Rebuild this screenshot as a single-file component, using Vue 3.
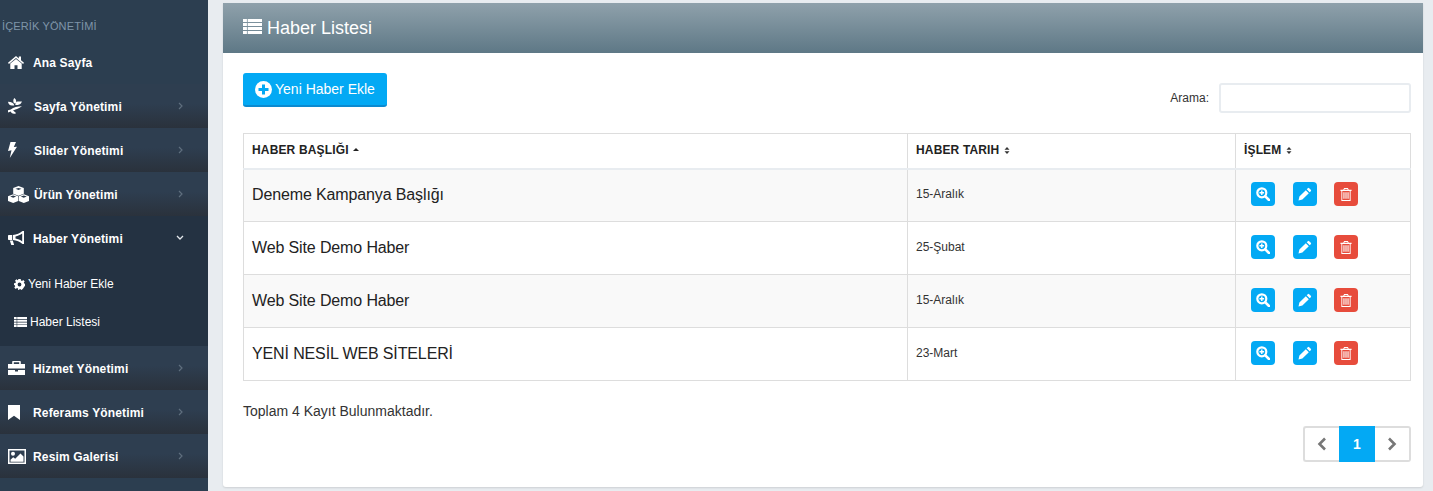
<script setup>
const chev = 'M1 1l3 3-3 3'
const icons = {
  home: { w: 16, h: 13, d: 'M8 0L0 6.700l.9 1.200L8 2l7.100 5.900.9-1.200-3-2.500V.6h-2.200v1.800zM8 2.900L2.300 7.600V13h4.200V9.300h3V13h4.200V7.600z' },
  leaf: { w: 14, h: 16, d: 'M6.200 0C5 1.800 5 3.800 6 5.200h1.600C8.700 3.600 8.400 1.500 6.200 0zM14 3.600H9.500C8.300 3.800 7.500 4.900 7.300 6.900h2.500C11.800 6.900 13.300 5.600 14 3.600zM0 3.800c.3 2.300 1.700 3.600 4 3.700h2.300C5.800 5 3.600 3.800 0 3.800zM14 8.200C9.500 8.300 5.600 9.300 2.800 11.400L0 12.300v2.300l2.700-1c.9 2 3 2.900 5.300 1.700-.9-1.400-1.900-2.100-3.200-2.500C7.200 11.400 10.800 10.500 14 8.200z' },
  bolt: { w: 9, h: 16, d: 'M2.500 0h5.500L5.800 5 9 4.700 1.800 16l1.700-7.700-3.500.6z' },
  cubes: { w: 21, h: 17, d: 'M10.500 0L15.800 2V7.800L10.500 9.800L5.200 7.800V2ZM5.200 8.200L10.200 10.200V15L5.200 17L0 15V10.200ZM15.800 8.200L21 10.200V15L15.800 17L10.800 15V10.200ZM7.500 2.800L10.500 3.900L13.500 2.800L10.500 1.900ZM2.200 10.500L5.200 11.700L8.200 10.500L5.200 9.500ZM12.800 10.500L15.800 11.700L18.800 10.500L15.800 9.500Z' },
  bullhorn: { w: 16, h: 14, d: 'M14.500 0H16v13h-1.500C12 10.800 8.500 9.300 5 9V4C8.500 3.700 12 2.200 14.500 0zM14.200 2.600C12.300 4 9.800 5 7.500 5.400v2.200c2.300.4 4.800 1.400 6.700 2.800zM0 5c0-.6.400-1 1-1h3.200v5H1c-.6 0-1-.4-1-1zM1.800 9.500h3l1.300 4.500H3.300z' },
  brief: { w: 17, h: 14, d: 'M5.200 0h6.600c.6 0 1 .4 1 1v2H17v4.500H0V3h4.200V1c0-.6.400-1 1-1zM5.800 1.300V3h5.400V1.300zM0 9h7v1.500h3V9h7v5H0z' },
  bookmark: { w: 12, h: 15, d: 'M0 0h12v15L6 10.800 0 15z' },
  picture: { w: 18, h: 15, d: 'M0 0h18v15H0zM1.500 1.500v12h15v-12zM5 2.700a2 2 0 110 4 2 2 0 010-4zM2.500 12.700v-2l2.700-2.400 2 1.500 5.300-5.300 3 3v5.200z' },
  gear: { w: 11, h: 11, d: 'M4.300 0h2.400l.3 1.500 1 .4L9.300.9l1.400 1.500-.9 1.200.4 1 1.500.2v2.400l-1.500.3-.4 1-.9 1.200-1.400 1.200-1.300-.9-1 .4-.3 1.600H4.300L4 9.400 3 9l-1.300.9L.3 8.600l.9-1.300-.4-1L0 6V4.300l1.500-.3.4-1L1 1.700 2.400.3 3.700 1.200l.4-.1zM5.500 3.600a1.900 1.900 0 100 3.800 1.900 1.900 0 000-3.800z' }
}
const list = 'M0 0h3.500v3.200H0zM4.200 0H17v3.200H4.200zM0 4.300h3.500v3.200H0zM4.200 4.300H17v3.200H4.200zM0 8.600h3.500v3.200H0zM4.200 8.600H17v3.200H4.200zM0 12.900h3.500V16H0zM4.200 12.900H17V16H4.200z'
const topItems = [
  { label: 'Sayfa Yönetimi', icon: 'leaf' },
  { label: 'Slider Yönetimi', icon: 'bolt' },
  { label: 'Ürün Yönetimi', icon: 'cubes' }
]
const lowerItems = [
  { label: 'Hizmet Yönetimi', icon: 'brief' },
  { label: 'Referams Yönetimi', icon: 'bookmark' },
  { label: 'Resim Galerisi', icon: 'picture' }
]
const rows = [
  { title: 'Deneme Kampanya Başlığı', date: '15-Aralık' },
  { title: 'Web Site Demo Haber', date: '25-Şubat' },
  { title: 'Web Site Demo Haber', date: '15-Aralık' },
  { title: 'YENİ NESİL WEB SİTELERİ', date: '23-Mart' }
]
</script>

<template>
  <div class="page">
    <aside class="sidebar">
      <div class="side-label">İÇERİK YÖNETİMİ</div>
      <a class="side-item home">
        <span class="ico"><svg :width="icons.home.w" :height="icons.home.h" :viewBox="`0 0 ${icons.home.w} ${icons.home.h}`"><path :d="icons.home.d" fill="#fff" /></svg></span>
        <span class="side-text">Ana Sayfa</span>
      </a>
      <a v-for="it in topItems" :key="it.label" class="side-item grad">
        <span class="ico"><svg :width="icons[it.icon].w" :height="icons[it.icon].h" :viewBox="`0 0 ${icons[it.icon].w} ${icons[it.icon].h}`"><path :d="icons[it.icon].d" fill="#fff" fill-rule="evenodd" /></svg></span>
        <span class="side-text shifted">{{ it.label }}</span>
        <svg class="chev" width="5" height="8" viewBox="0 0 5 8"><path :d="chev" fill="none" stroke="#5f6f7e" stroke-width="1.200" /></svg>
      </a>
      <div class="open-group">
        <a class="side-item">
          <span class="ico"><svg width="16" height="14" viewBox="0 0 16 14"><path :d="icons.bullhorn.d" fill="#fff" fill-rule="evenodd" /></svg></span>
          <span class="side-text">Haber Yönetimi</span>
          <svg class="chev down" width="8" height="6" viewBox="0 0 8 6"><path d="M1 1l3 3 3-3" fill="none" stroke="#e4e8ec" stroke-width="1.300" /></svg>
        </a>
        <a class="sub-item first">
          <svg width="11" height="11" viewBox="0 0 11 11"><path :d="icons.gear.d" fill="#fff" fill-rule="evenodd" /></svg>
          <span>Yeni Haber Ekle</span>
        </a>
        <a class="sub-item second">
          <svg width="13" height="10" viewBox="0 0 17 16" preserveAspectRatio="none"><path :d="list" fill="#fff" /></svg>
          <span>Haber Listesi</span>
        </a>
      </div>
      <a v-for="it in lowerItems" :key="it.label" class="side-item grad">
        <span class="ico"><svg :width="icons[it.icon].w" :height="icons[it.icon].h" :viewBox="`0 0 ${icons[it.icon].w} ${icons[it.icon].h}`"><path :d="icons[it.icon].d" fill="#fff" fill-rule="evenodd" /></svg></span>
        <span class="side-text">{{ it.label }}</span>
        <svg class="chev" width="5" height="8" viewBox="0 0 5 8"><path :d="chev" fill="none" stroke="#5f6f7e" stroke-width="1.200" /></svg>
      </a>
    </aside>

    <main class="main">
      <section class="card">
        <header class="card-head">
          <svg width="19" height="15" viewBox="0 0 17 16" preserveAspectRatio="none"><path :d="list" fill="#fff" /></svg>
          <h1>Haber Listesi</h1>
        </header>
        <div class="card-body">
          <div class="toolbar">
            <button class="add-btn" type="button">
              <svg width="17" height="17" viewBox="0 0 17 17"><circle cx="8.500" cy="8.500" r="8.500" fill="#fff" /><path d="M7 3.500h3V7h3.500v3H10v3.500H7V10H3.500V7H7z" fill="#03a9f4" /></svg>
              Yeni Haber Ekle
            </button>
            <label class="search">Arama:<input type="text" /></label>
          </div>
          <table class="grid">
            <colgroup><col class="c1" /><col class="c2" /><col class="c3" /></colgroup>
            <thead>
              <tr>
                <th>HABER BAŞLIĞI <svg class="sort" width="6" height="9" viewBox="0 0 6 9"><path d="M3 2l3 3H0z" fill="#222" /></svg></th>
                <th>HABER TARIH <svg class="sort" width="6" height="9" viewBox="0 0 6 9"><path d="M3 1l2.500 2.800h-5zM3 8L.5 5.200h5z" fill="#333" /></svg></th>
                <th>İŞLEM <svg class="sort" width="6" height="9" viewBox="0 0 6 9"><path d="M3 1l2.500 2.800h-5zM3 8L.5 5.200h5z" fill="#333" /></svg></th>
              </tr>
            </thead>
            <tbody>
              <tr v-for="(r, i) in rows" :key="i">
                <td class="title">{{ r.title }}</td>
                <td class="date">{{ r.date }}</td>
                <td>
                  <div class="actions">
                    <span class="act blue">
                      <svg width="14" height="14" viewBox="0 0 14 14"><circle cx="5.800" cy="5.800" r="4.500" fill="none" stroke="#fff" stroke-width="2.200" /><path d="M9.300 9.300L13 13" stroke="#fff" stroke-width="2.600" stroke-linecap="round" /><path d="M3.500 5.800h4.600M5.800 3.500v4.600" stroke="#fff" stroke-width="1.400" /></svg>
                    </span>
                    <span class="act blue">
                      <svg width="14" height="14" viewBox="0 0 14 14"><path d="M9.800 1.200a1 1 0 011.400 0l1.600 1.600a1 1 0 010 1.400l-1.100 1.100-3-3zM7.800 3.200l3 3L4.400 12.600 0.500 13.500l.9-3.900z" fill="#fff" /></svg>
                    </span>
                    <span class="act red">
                      <svg width="12" height="13" viewBox="0 0 12 14"><path fill-rule="evenodd" d="M4 0h4l1 2h3v1.200h-1V14H1V3.200H0V2h3zM4.500 1L4.200 2h3.600l-.3-1zM2 3.200v9.800h8V3.200zM3.200 4.500h1.200v7H3.200zM5.400 4.500h1.200v7H5.400zM7.600 4.500h1.200v7H7.600z" fill="#fff" /></svg>
                    </span>
                  </div>
                </td>
              </tr>
            </tbody>
          </table>
          <p class="total">Toplam 4 Kayıt Bulunmaktadır.</p>
          <nav class="pager">
            <a class="pg"><svg width="10" height="14" viewBox="0 0 10 14"><path d="M8 1.500L2.500 7 8 12.500" fill="none" stroke="#777" stroke-width="2.600" /></svg></a>
            <a class="pg active">1</a>
            <a class="pg"><svg width="10" height="14" viewBox="0 0 10 14"><path d="M2 1.500L7.500 7 2 12.500" fill="none" stroke="#777" stroke-width="2.600" /></svg></a>
          </nav>
        </div>
      </section>
    </main>
  </div>
</template>

<style>
html, body { margin: 0; padding: 0; overflow: hidden; }
</style>

<style scoped>
.page {
  display: flex;
  width: 1433px;
  height: 491px;
  overflow: hidden;
  background: #e8ecf0;
  font-family: "Liberation Sans", Arial, sans-serif;
  color: #222;
}
.sidebar {
  width: 208px;
  flex: none;
  height: 491px;
  overflow: hidden;
  background: #2c3e50;
}
.side-label {
  height: 40px;
  box-sizing: border-box;
  padding: 20px 0 0 2px;
  font-size: 11px;
  line-height: 13px;
  letter-spacing: 0.13px;
  color: #7f95a9;
}
.side-item {
  height: 44px;
  box-sizing: border-box;
  display: flex;
  align-items: center;
  padding: 0 25px 0 8px;
  color: #fff;
  font-size: 12px;
  font-weight: 700;
}
.side-text {
  margin-top: 2px;
  letter-spacing: 0.15px;
}
.home { background: #2c3e50; }
.grad { background: linear-gradient(#2e3e50, #2e3e50 45%, #2a323c); }
.ico {
  width: 25px;
  flex: none;
  display: flex;
  align-items: center;
}
.shifted { margin-left: 1px; }
.chev { margin-left: auto; }
.chev.down { margin-right: -1px; }
.open-group { background: #243242; height: 130px; }
.sub-item {
  display: flex;
  align-items: center;
  gap: 3px;
  padding-left: 14px;
  color: #fff;
  font-size: 12px;
}
.sub-item.first { height: 48px; }
.sub-item.second { height: 28px; }
.main {
  flex: 1;
  min-width: 0;
  padding: 3px 10px 0 15px;
}
.card {
  background: #fff;
  height: 484px;
  border-radius: 0 0 3px 3px;
  box-shadow: 0 1px 2px rgba(0, 0, 0, 0.12);
}
.card-head {
  height: 50px;
  box-sizing: border-box;
  display: flex;
  align-items: center;
  gap: 5px;
  padding: 0 20px;
  background: linear-gradient(#8fa1ab, #5e7886);
  color: #fff;
}
.card-head svg { margin-top: -3px; }
.card-head h1 {
  margin: -1px 0 0;
  font-size: 18px;
  font-weight: 400;
  line-height: 20px;
}
.card-body { padding: 20px 12px 20px 20px; }
.toolbar {
  display: flex;
  justify-content: space-between;
  align-items: flex-start;
  height: 60px;
}
.add-btn {
  width: 144px;
  height: 34px;
  box-sizing: border-box;
  border: 0;
  border-bottom: 2px solid #0b8ad0;
  border-radius: 3px;
  background: #03a9f4;
  color: #fff;
  font: 14px "Liberation Sans", Arial, sans-serif;
  display: flex;
  align-items: center;
  gap: 3px;
  padding: 0 0 0 12px;
}
.search {
  display: flex;
  align-items: center;
  gap: 10px;
  font-size: 12px;
  color: #333;
  margin-top: 10px;
}
.search input {
  width: 192px;
  height: 30px;
  box-sizing: border-box;
  border: 2px solid #e8ecf0;
  border-radius: 3px;
  background: #fff;
  outline: 0;
  padding: 0;
}
.grid {
  width: 1167px;
  border-collapse: collapse;
  table-layout: fixed;
}
.c1 { width: 664px; }
.c2 { width: 328px; }
.c3 { width: 175px; }
.grid th, .grid td {
  border: 1px solid #ddd;
  padding: 0 8px;
  text-align: left;
  box-sizing: border-box;
}
.grid th {
  height: 35px;
  font-size: 12px;
  font-weight: 700;
  letter-spacing: 0.15px;
  color: #222;
  border-bottom: 2px solid #e8ecf0;
  padding-bottom: 2px;
}
.sort { vertical-align: -1px; margin-left: 1px; }
.grid td { height: 53px; font-size: 12px; color: #333; }
.grid td.date { padding-bottom: 2px; }
.grid td.title {
  font-size: 16px;
  letter-spacing: -0.13px;
  color: #222;
}
.grid tbody tr:first-child td.title { padding-bottom: 1px; }
.grid tbody tr:nth-child(odd) { background: #f9f9f9; }
.actions {
  display: flex;
  gap: 18px;
  padding-left: 7px;
  padding-bottom: 2px;
}
.act {
  width: 24px;
  height: 24px;
  border-radius: 4px;
  display: flex;
  align-items: center;
  justify-content: center;
}
.act + .act + .act { margin-left: -1px; }
.blue { background: #03a9f4; }
.red { background: #e74c3c; }
.total {
  margin: 23px 0 0;
  font-size: 14px;
  line-height: 14px;
  color: #333;
}
.pager {
  display: flex;
  justify-content: flex-end;
  margin-top: 8px;
}
.pg {
  width: 36px;
  height: 36px;
  box-sizing: border-box;
  border: 2px solid #ddd;
  display: flex;
  align-items: center;
  justify-content: center;
  background: #fff;
  font-size: 14px;
}
.pg:first-child { border-right: 0; border-radius: 3px 0 0 3px; }
.pg:last-child { border-left: 0; border-radius: 0 3px 3px 0; }
.pg.active { background: #03a9f4; border-color: #03a9f4; color: #fff; font-weight: 700; }
</style>
